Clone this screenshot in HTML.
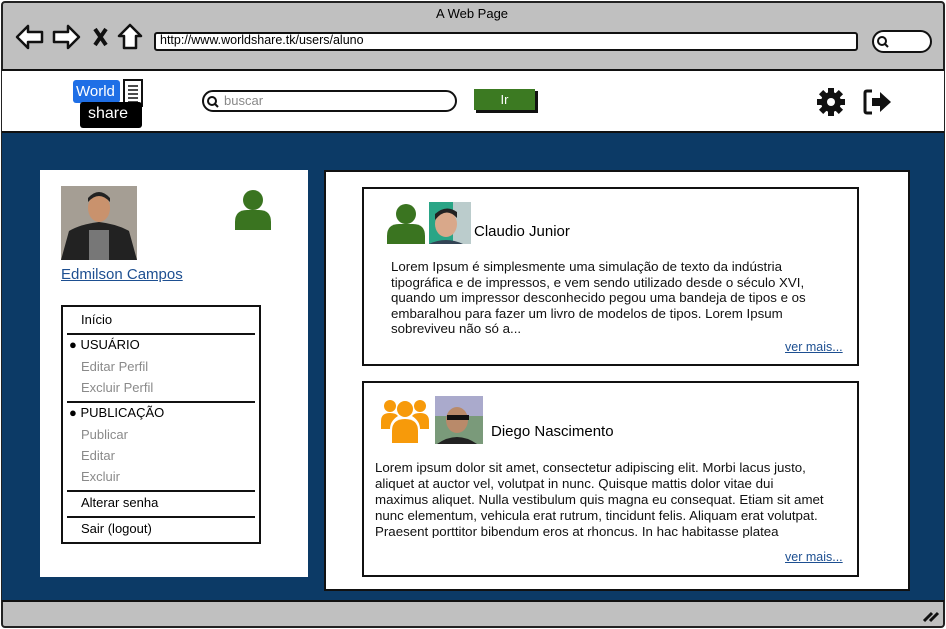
<!DOCTYPE html>
<html><head><meta charset="utf-8"><style>
*{margin:0;padding:0;box-sizing:border-box}
body{width:946px;height:629px;overflow:hidden;background:#fff;font-family:"Liberation Sans",sans-serif;color:#000;position:relative}
.abs{position:absolute}
.frame{left:1px;top:1px;width:944px;height:627px;border:2px solid #222;border-radius:4px;background:#c0c0c0}
.t{font-size:13px;white-space:nowrap}
.menu div{position:absolute;left:18px;font-size:13px}
.g{color:#8a8a8a}
.menu div.line{position:absolute;left:4px;right:4px;height:2px;background:#111}
.p{font-size:13.3px;line-height:15.5px;color:#111}
a{color:#1d4f91}
</style></head><body>
<div class="abs frame"></div>
<div class="abs t" style="left:436px;top:6px;font-size:13px">A Web Page</div>
<svg class="abs" style="left:14px;top:22px" width="130" height="30" viewBox="0 0 130 30">
<path d="M3 15 L14 4 L14 10 L28 10 L28 20 L14 20 L14 26 Z" fill="#fff" stroke="#111" stroke-width="2.5" stroke-linejoin="round"/>
<path d="M65 15 L54 4 L54 10 L40 10 L40 20 L54 20 L54 26 Z" fill="#fff" stroke="#111" stroke-width="2.5" stroke-linejoin="round"/>
<path d="M81 7 L92 23 M92 7 L81 23" stroke="#111" stroke-width="4"/>
<path d="M116 3 L105 14 L110 14 L110 26 L122 26 L122 14 L127 14 Z" fill="#fff" stroke="#111" stroke-width="2.5" stroke-linejoin="round"/>
</svg>
<div class="abs" style="left:154px;top:32px;width:704px;height:19px;background:#fff;border:2px solid #111;border-radius:3px"></div>
<div class="abs t" style="left:160px;top:33px;font-size:12.5px">http://www.worldshare.tk/users/aluno</div>
<div class="abs" style="left:872px;top:30px;width:60px;height:23px;background:#fff;border:2px solid #111;border-radius:12px"></div>
<svg class="abs" style="left:876px;top:35px" width="14" height="14"><circle cx="6" cy="6" r="4" fill="none" stroke="#111" stroke-width="2"/><path d="M9 9 L12 12" stroke="#111" stroke-width="2"/></svg>
<div class="abs" style="left:2px;top:69px;width:942px;height:64px;background:#fff;border-top:2px solid #111;border-bottom:2px solid #111"></div>
<div class="abs" style="left:73px;top:80px;width:47px;height:23px;background:#1f6fe6;border-radius:3px;color:#fff;font-size:15px;padding:3px 0 0 3px">World</div>
<div class="abs" style="left:123px;top:79px;width:20px;height:28px;background:#fff;border:2px solid #111"></div>
<svg class="abs" style="left:125px;top:83px" width="16" height="22"><path d="M3 3H13M3 7H13M3 11H13M3 15H13M3 19H13" stroke="#111" stroke-width="1.5"/></svg>
<div class="abs" style="left:80px;top:102px;width:62px;height:26px;background:#000;border-radius:3px;color:#fff;font-size:16px;padding:3px 0 0 8px">share</div>
<div class="abs" style="left:202px;top:90px;width:255px;height:22px;background:#fff;border:2px solid #111;border-radius:11px"></div>
<svg class="abs" style="left:206px;top:95px" width="14" height="14"><circle cx="6" cy="6" r="4" fill="none" stroke="#111" stroke-width="2"/><path d="M9 9 L12 12" stroke="#111" stroke-width="2"/></svg>
<div class="abs t" style="left:224px;top:93px;color:#888">buscar</div>
<div class="abs" style="left:476px;top:91px;width:62px;height:22px;background:#111"></div>
<div class="abs" style="left:474px;top:89px;width:61px;height:21px;background:#3c7a22;color:#fff;font-size:13px;text-align:center;line-height:21px">Ir</div>
<svg class="abs" style="left:816px;top:87px" width="30" height="30" viewBox="0 0 30 30"><g fill="#111"><circle cx="15" cy="15" r="10"/><rect x="12" y="1" width="6" height="28"/><rect x="1" y="12" width="28" height="6"/><rect x="12" y="1" width="6" height="28" transform="rotate(45 15 15)"/><rect x="12" y="1" width="6" height="28" transform="rotate(-45 15 15)"/></g><circle cx="15" cy="15" r="4" fill="#fff"/></svg>
<svg class="abs" style="left:862px;top:88px" width="32" height="28" viewBox="0 0 32 28"><path d="M10 3 H5 Q3 3 3 5 V23 Q3 25 5 25 H10" fill="none" stroke="#111" stroke-width="3"/><path d="M10 10 H18 V4 L29 14 L18 24 V18 H10 Z" fill="#111"/></svg>
<div class="abs" style="left:2px;top:133px;width:942px;height:468px;background:#0c3a66"></div>
<div class="abs" style="left:40px;top:170px;width:268px;height:407px;background:#fff"></div>
<svg class="abs" style="left:61px;top:186px" width="76" height="74"><rect width="76" height="74" fill="#a59e94"/><path d="M0 74 L8 45 Q20 38 38 36 Q56 38 68 45 L76 74Z" fill="#222"/><rect x="28" y="44" width="20" height="30" fill="#777"/><ellipse cx="38" cy="22" rx="11" ry="14" fill="#c9926d"/><path d="M27 16 Q38 4 49 16 L49 12 Q38 0 27 12Z" fill="#222"/></svg>
<svg class="abs" style="left:233px;top:188px" width="40" height="42" viewBox="0 0 40 42"><circle cx="20" cy="12" r="10" fill="#3a7420"/><path d="M2 42 V34 Q2 22 14 22 H26 Q38 22 38 34 V42Z" fill="#3a7420"/></svg>
<div class="abs t" style="left:61px;top:266px;font-size:15px"><a style="text-decoration:underline">Edmilson Campos</a></div>
<div class="abs menu" style="left:61px;top:305px;width:200px;height:239px;border:2px solid #111">
<div style="top:5px">Início</div>
<div class="line" style="top:26px"></div>
<div style="top:30px;left:6px">● USUÁRIO</div>
<div class="g" style="top:52px">Editar Perfil</div>
<div class="g" style="top:73px">Excluir Perfil</div>
<div class="line" style="top:94px"></div>
<div style="top:98px;left:6px">● PUBLICAÇÃO</div>
<div class="g" style="top:120px">Publicar</div>
<div class="g" style="top:141px">Editar</div>
<div class="g" style="top:162px">Excluir</div>
<div class="line" style="top:183px"></div>
<div style="top:188px">Alterar senha</div>
<div class="line" style="top:209px"></div>
<div style="top:214px">Sair (logout)</div>
</div>
<div class="abs" style="left:324px;top:170px;width:586px;height:421px;background:#fff;border:2px solid #111"></div>
<div class="abs" style="left:362px;top:187px;width:497px;height:179px;border:2px solid #111;background:#fff"></div>
<svg class="abs" style="left:386px;top:202px" width="40" height="42" viewBox="0 0 40 42"><circle cx="20" cy="12" r="10" fill="#3a7420"/><path d="M1 42 V34 Q1 22 13 22 H27 Q39 22 39 34 V42Z" fill="#3a7420"/></svg>
<svg class="abs" style="left:429px;top:202px" width="42" height="42"><rect width="42" height="42" fill="#2aa586"/><rect x="24" width="18" height="42" fill="#bcc"/><ellipse cx="17" cy="22" rx="11" ry="13" fill="#d9a88a"/><path d="M6 18 Q17 4 28 16 L28 10 Q17 2 6 12Z" fill="#222"/><path d="M0 42 Q17 34 34 42Z" fill="#345"/></svg>
<div class="abs t" style="left:474px;top:223px;font-size:15px">Claudio Junior</div>
<div class="abs p" style="left:391px;top:259px;width:425px">Lorem Ipsum é simplesmente uma simulação de texto da indústria tipográfica e de impressos, e vem sendo utilizado desde o século XVI, quando um impressor desconhecido pegou uma bandeja de tipos e os embaralhou para fazer um livro de modelos de tipos. Lorem Ipsum sobreviveu não só a...</div>
<div class="abs t" style="left:785px;top:340px;font-size:12.5px"><a style="text-decoration:underline">ver mais...</a></div>
<div class="abs" style="left:362px;top:381px;width:497px;height:196px;border:2px solid #111;background:#fff"></div>
<svg class="abs" style="left:381px;top:397px" width="48" height="46" viewBox="0 0 48 46"><g fill="#f79a0a"><circle cx="24" cy="12" r="8"/><circle cx="9" cy="9" r="6"/><circle cx="39" cy="9" r="6"/><path d="M11 46 V34 Q11 22 24 22 Q37 22 37 34 V46Z"/><path d="M0 32 V24 Q0 16 9 16 Q15 16 17 19 Q9 24 9 32Z"/><path d="M48 32 V24 Q48 16 39 16 Q33 16 31 19 Q39 24 39 32Z"/></g></svg>
<svg class="abs" style="left:435px;top:396px" width="48" height="48"><rect width="48" height="48" fill="#7a9a7a"/><rect width="48" height="20" fill="#aac"/><ellipse cx="22" cy="24" rx="11" ry="13" fill="#b98a6a"/><rect x="12" y="19" width="22" height="5" fill="#111"/><path d="M2 48 Q22 34 42 48Z" fill="#222"/></svg>
<div class="abs t" style="left:491px;top:423px;font-size:15px">Diego Nascimento</div>
<div class="abs p" style="left:375px;top:460px;width:450px;height:78px;overflow:hidden;line-height:16px">Lorem ipsum dolor sit amet, consectetur adipiscing elit. Morbi lacus justo, aliquet at auctor vel, volutpat in nunc. Quisque mattis dolor vitae dui maximus aliquet. Nulla vestibulum quis magna eu consequat. Etiam sit amet nunc elementum, vehicula erat rutrum, tincidunt felis. Aliquam erat volutpat. Praesent porttitor bibendum eros at rhoncus. In hac habitasse platea</div>
<div class="abs t" style="left:785px;top:550px;font-size:12.5px"><a style="text-decoration:underline">ver mais...</a></div>
<div class="abs" style="left:2px;top:600px;width:942px;height:2px;background:#111"></div>
<svg class="abs" style="left:922px;top:609px" width="18" height="14"><path d="M2 12 L10 4 M8 12 L16 4" stroke="#111" stroke-width="3"/></svg>
</body></html>
